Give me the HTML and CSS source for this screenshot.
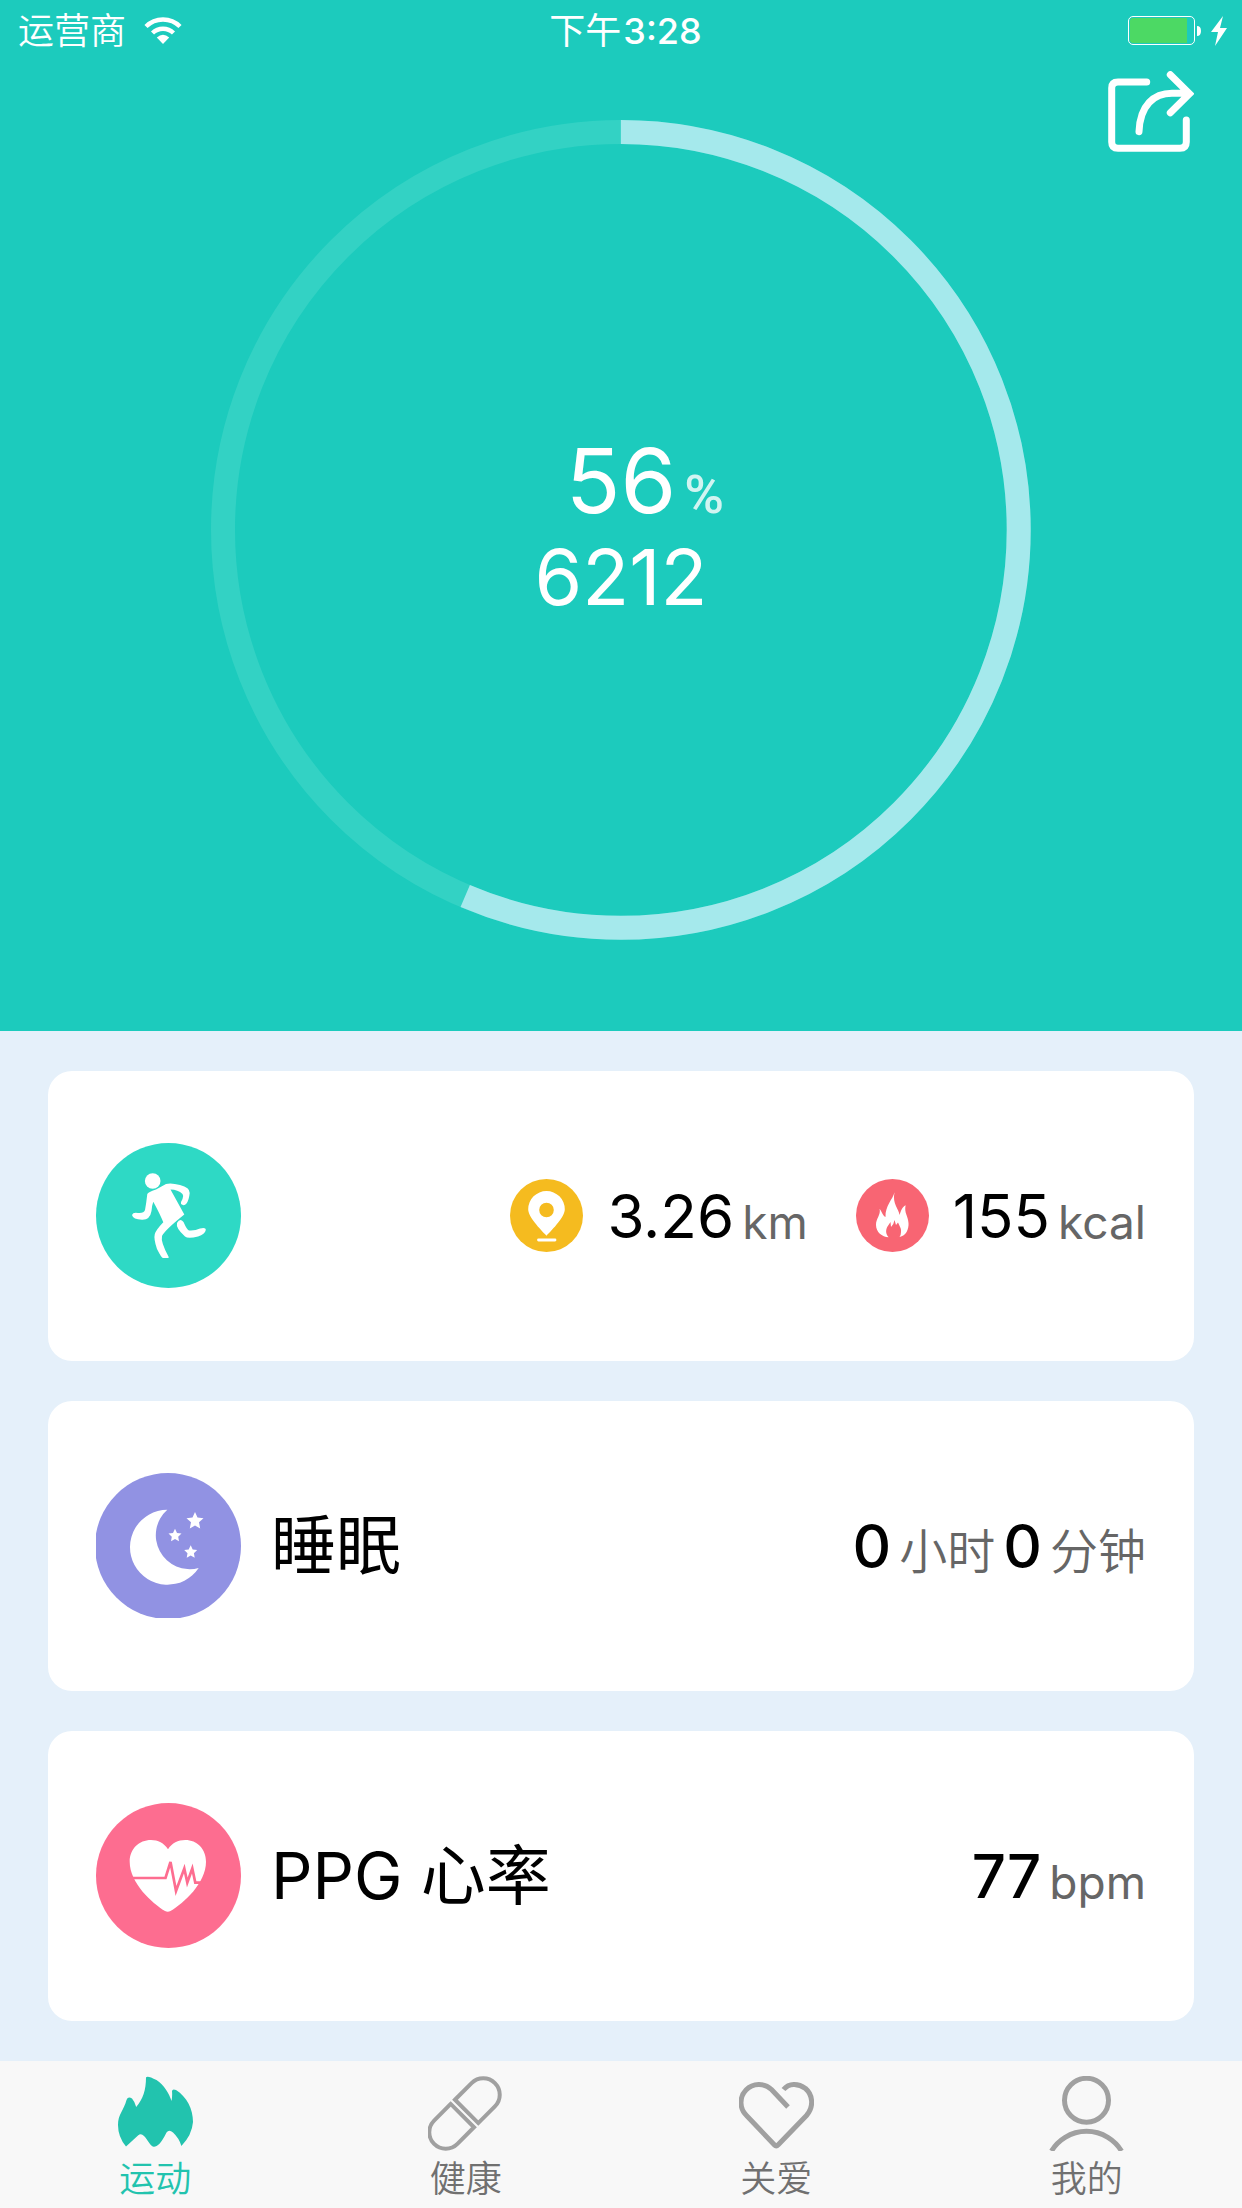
FILE: index.html
```html
<!DOCTYPE html>
<html lang="zh-CN">
<head>
  <meta charset="UTF-8" />
  <meta name="viewport" content="width=device-width, initial-scale=1.0"/>
  <title>运动</title>
  <link rel="stylesheet" href="styles.css">
</head>
<body>

<header class="hero">
  <div class="status">
    <div class="carrier">
      <span>运营商</span>
      <svg class="wifi" viewBox="0 0 38 28" aria-hidden="true">
        <path d="M2 9.5a24 24 0 0 1 34 0M8.5 16a15 15 0 0 1 21 0" fill="none" stroke="#fff" stroke-width="4.4"/>
        <path d="M12.8 20.5q6.2-5.5 12.4 0L19 27z" fill="#fff"/>
      </svg>
    </div>
    <time class="clock">下午<b>3:28</b></time>
    <div class="power">
      <svg class="battery" viewBox="0 0 74 30" aria-hidden="true">
        <rect x="0.5" y="0.5" width="66" height="28" rx="4.5" fill="none" stroke="#fff"/>
        <path d="M5 2H59V27H5Q2 27 2 24V5Q2 2 5 2Z" fill="#4cd964"/>
        <path d="M69 10q4 0 4 5t-4 5z" fill="#fff"/>
      </svg>
      <svg class="bolt" viewBox="0 0 16 30" aria-hidden="true">
        <path d="M12 0L0 16H7L4 30L16 12H9Z" fill="#fff"/>
      </svg>
    </div>
  </div>

  <button class="share" aria-label="分享">
    <svg viewBox="0 0 86 82" fill="none" stroke="#fff" stroke-width="7" stroke-linecap="round">
      <path d="M38.7 11H10Q3.7 11 3.7 17V71Q3.7 77.3 10 77.3H72Q78.3 77.3 78.3 71V49"/>
      <path d="M62.3 3.7L81.5 22.7L62.3 41.7M31 60.7C32 34 46 22.3 64 22.3H79"/>
    </svg>
  </button>

  <div class="ring">
    <svg viewBox="0 0 820 820" aria-hidden="true">
      <circle class="ring-track" cx="410" cy="410" r="398"/>
      <circle class="ring-value" cx="410" cy="410" r="398" pathLength="100" stroke-dasharray="56.4 100" transform="rotate(-90 410 410)"/>
    </svg>
    <div class="ring-text">
      <p class="percent"><span class="percent-num">56</span><span class="percent-sign">%</span></p>
      <p class="steps">6212</p>
    </div>
  </div>
</header>

<main class="cards">
  <section class="card">
    <svg class="card-icon" viewBox="0 0 145 145" aria-hidden="true">
      <circle cx="72.5" cy="72.5" r="72.5" fill="#2ed9c5"/>
      <g fill="#fff">
        <circle cx="56.7" cy="38" r="7.8"/>
        <path d="M51.3 51Q52 49 60 46.5L70 41Q75 39.5 84 42Q94 44.5 93.7 50Q93 57 90.5 60.5Q88 63.5 85 61Q84.5 59 86.5 56Q88 53 86.5 51Q82 46.5 74.5 46.5L88.3 71.5Q69 87 66 93Q64.5 99 72.7 114Q73 115.3 71.5 115L67 115Q65.5 115 61 106Q57.5 96 58.8 91Q60 87 67.3 79.3Q64 71 57.3 58.7Q56 62 55.5 68Q54 77 46 76.7Q37 76.5 36 72Q37 69 42 70Q48 70.5 49 67Q50.3 60 51.3 51Z"/>
        <path d="M81 80Q84 74.5 87.5 79Q91 87 93 87.5Q99 88 104 85.5Q110 84 109.8 87Q109 91 102 93.5Q92 96 89 93.5Q79.5 85 81 80Z"/>
      </g>
    </svg>
    <div class="stats">
      <div class="stat">
        <svg class="stat-icon" viewBox="0 0 73 73" aria-hidden="true">
          <circle cx="36.5" cy="36.5" r="36.5" fill="#f5bb1f"/>
          <path fill="#fff" fill-rule="evenodd" d="M36.5 56.7C30 50 18.2 38 18.2 30.3a18.3 18.3 0 0 1 36.6 0C54.8 38 43 50 36.5 56.7ZM36.5 23.7a7.3 7.3 0 1 0 0 14.6a7.3 7.3 0 1 0 0-14.6Z"/>
          <path d="M28.5 61H45" stroke="#fff" stroke-width="2.8" stroke-linecap="round"/>
        </svg>
        <span class="num">3.26</span><span class="unit latin">km</span>
      </div>
      <div class="stat">
        <svg class="stat-icon" viewBox="0 0 73 73" aria-hidden="true">
          <circle cx="36.5" cy="36.5" r="36.5" fill="#f86573"/>
          <path fill="#fff" d="M38.5 13.3C37 20 29 27 29.5 38C27 37 26 33 23.6 29.7C25 36 20 39 20 46C20 53 26 58 32.6 58.3C29 54 30 50 31.5 47.5L34.5 43L35 48Q38 45 38.5 41L40 46L42 43.5C44 48 45.5 50 45 53Q45 56 43.5 58C50 57 53 50 52.5 44C52 37 48 34 49.6 26.3C46 28 45 32 43.5 36C43 30 36 25 38.5 13.3Z"/>
        </svg>
        <span class="num">155</span><span class="unit latin">kcal</span>
      </div>
    </div>
  </section>

  <section class="card">
    <svg class="card-icon" viewBox="0 0 145 145" aria-hidden="true">
      <circle cx="72" cy="73" r="73" fill="#9192e3"/>
      <g fill="#fff">
        <path d="M71.3 36.7A37.5 37.5 0 1 0 102.7 95A34 34 0 0 1 71.3 36.7Z"/>
        <path d="M99 39L101.5 44.6L107.5 45.2L103 49.3L104.2 55.5L99 52.5L93.8 55.5L95 49.3L90.5 45.2L96.5 44.6Z"/>
        <path d="M79 55.8L81 60L85.5 60.5L82.2 63.7L83 68.3L79 66L75 68.3L75.8 63.7L72.5 60.5L77 60Z"/>
        <path d="M94.7 72.3L96.7 76.5L101.2 77L97.9 80.2L98.7 84.8L94.7 82.5L90.7 84.8L91.5 80.2L88.2 77L92.7 76.5Z"/>
      </g>
    </svg>
    <h2 class="card-title">睡眠</h2>
    <div class="stats">
      <div class="stat strong">
        <span class="num">0</span><span class="unit">小时</span><span class="num">0</span><span class="unit">分钟</span>
      </div>
    </div>
  </section>

  <section class="card">
    <svg class="card-icon" viewBox="0 0 145 145" aria-hidden="true">
      <circle cx="72.5" cy="72.5" r="72.5" fill="#fd6d90"/>
      <path fill="#fff" d="M72 46.3C68 40 62 37 55 37C43 37 33.7 46 33.7 58.7C33.7 80 56 100 69 108Q71.7 109.5 74.5 108C88 100 110 80 110 58.7C110 46 101 37 89.3 37C82 37 76 40 72 46.3Z"/>
      <path d="M37 75H69.5L74.5 59L80 88L88.3 65.5L91.3 79.5L96.3 65.5L99.3 79.7H106" fill="none" stroke="#fd6d90" stroke-width="2.7"/>
    </svg>
    <h2 class="card-title">PPG 心率</h2>
    <div class="stats">
      <div class="stat strong">
        <span class="num">77</span><span class="unit latin">bpm</span>
      </div>
    </div>
  </section>
</main>

<nav class="tabbar">
  <a class="tab active" href="#sport">
    <svg class="tab-icon" viewBox="0 0 75 75" aria-hidden="true">
      <path fill="currentColor" d="M28 1.5Q29-1 38.5 4C46 9 51 17 53.5 25Q54.5 20 54 15Q54.5 12.5 58 14C69 21 75 33 75 46Q74 59 63.4 70Q61 62 55 56.5Q51 53 48.5 56.5C43 68 39 71 35.6 70.7C32 70 30 64 26 60Q23 57 20 59.5L8 70.5Q0 61 0 49C0 38 6 34 8.5 24Q10 20 14 22.5Q17 26 18.2 31C25 23 28 14 28 1.5Z"/>
    </svg>
    <span>运动</span>
  </a>
  <a class="tab" href="#health">
    <svg class="tab-icon line" viewBox="0 0 75 75" aria-hidden="true">
      <g transform="translate(36.5 37.5) rotate(45)">
        <path d="M-16.5-3V-26.5a16.5 16.5 0 0 1 33 0V-3Z"/>
        <path d="M-16.5 3V26.5a16.5 16.5 0 0 0 33 0V3Z"/>
      </g>
    </svg>
    <span>健康</span>
  </a>
  <a class="tab" href="#care">
    <svg class="tab-icon line wide" viewBox="0 0 75 75" aria-hidden="true">
      <path d="M49 31L32.5 13.5A18 18 0 0 0 7.5 39.5L35.5 69Q37.3 71 39 69L67.5 39.5C75 31 74 19 66.5 12.5C59 7 50 7 44.5 13.5"/>
    </svg>
    <span>关爱</span>
  </a>
  <a class="tab" href="#me">
    <svg class="tab-icon line wide" viewBox="0 0 75 75" aria-hidden="true">
      <circle cx="37.5" cy="24.3" r="22"/>
      <path d="M2.5 75A41 41 0 0 1 72.5 75"/>
    </svg>
    <span>我的</span>
  </a>
</nav>

</body>
</html>
```
FILE: styles.css
```css
* {
  box-sizing: border-box;
}
body {
  font-family: Inter, "Noto Sans CJK SC", sans-serif;
  margin: 0;
  min-height: 100vh;
  display: flex;
  flex-direction: column;
  background: #e5f0fa;
  color: #000;
}
h2, p {
  margin: 0;
  font-weight: 400;
}
svg {
  display: block;
}

/* top */
.hero {
  position: relative;
  background: #1ccbbd;
  color: #fff;
  padding-bottom: 91px;
}
.status {
  display: grid;
  grid-template-columns: 1fr auto 1fr;
  align-items: center;
  height: 62px;
  padding: 0 15px 0 18px;
  font-size: 36px;
  line-height: 62px;
}
.carrier {
  display: flex;
  align-items: center;
  gap: 18px;
  font-weight: 350;
}
.wifi {
  width: 38px;
  height: 28px;
}
.clock {
  padding-left: 6px;
}
.clock b {
  padding-left: 2px;
  font-weight: 500;
}
.power {
  display: flex;
  justify-content: flex-end;
  align-items: center;
  gap: 9px;
}
.battery {
  width: 74px;
  height: 30px;
}
.bolt {
  width: 16px;
  height: 30px;
}
.share {
  position: absolute;
  top: 71px;
  right: 48px;
  padding: 0;
  border: none;
  background: none;
  cursor: pointer;
}
.share svg {
  width: 86px;
  height: 82px;
}
.ring {
  display: grid;
  width: 66%;
  margin: 58px auto 0;
}
.ring > * {
  grid-area: 1 / 1;
}
.ring circle {
  fill: none;
  stroke-width: 24;
}
.ring-track {
  stroke: #33d2c4;
}
.ring .ring-value {
  stroke: #a5e9ec;
}
.ring-text {
  align-self: center;
  padding-bottom: 12px;
  text-align: center;
}
.percent {
  display: grid;
  grid-template-columns: 1fr auto 1fr;
  align-items: baseline;
  line-height: 92px;
}
.percent-num {
  grid-column: 2;
  font-size: 90px;
}
.percent-sign {
  padding-left: 8px;
  font-family: Roboto, sans-serif;
  font-size: 54px;
  font-weight: 500;
  text-align: left;
  opacity: 0.8;
}
.steps {
  font-size: 77px;
  line-height: 72px;
}

/* cards */
.cards {
  flex: 1;
  display: flex;
  flex-direction: column;
  gap: 40px;
  padding: 40px 48px;
}
.card {
  flex: 1;
  display: flex;
  align-items: center;
  gap: 30px;
  padding: 48px;
  border-radius: 24px;
  background: #fff;
}
.card-icon {
  width: 145px;
  height: 145px;
}
.card-title {
  font-size: 65px;
  line-height: 90px;
}
.stats {
  display: flex;
  gap: 48px;
  margin-left: auto;
}
.stat {
  display: flex;
  align-items: center;
  line-height: 72px;
}
.stat-icon {
  width: 73px;
  height: 73px;
  margin-right: 24px;
}
.num {
  font-size: 60px;
}
.unit {
  padding: 12px 0 0 8px;
  font-size: 48px;
  font-weight: 350;
  color: #666;
}
.latin {
  font-size: 46px;
  font-weight: 400;
}
.strong .num {
  font-weight: 500;
}
.unit + .num {
  padding-left: 8px;
}

/* bottom tabs */
.tabbar {
  display: flex;
  height: 147px;
  padding-top: 15px;
  background: #f8f8f8;
}
.tab {
  flex: 1;
  display: flex;
  flex-direction: column;
  align-items: center;
  gap: 6px;
  color: #707070;
  font-size: 36px;
  font-weight: 350;
  line-height: 44px;
  text-decoration: none;
}
.tab.active {
  color: #22c3ae;
}
.tab-icon {
  width: 75px;
  height: 75px;
}
.line {
  fill: none;
  stroke: #a0a0a0;
  stroke-width: 4px;
}
.wide {
  stroke-width: 5px;
}
```
